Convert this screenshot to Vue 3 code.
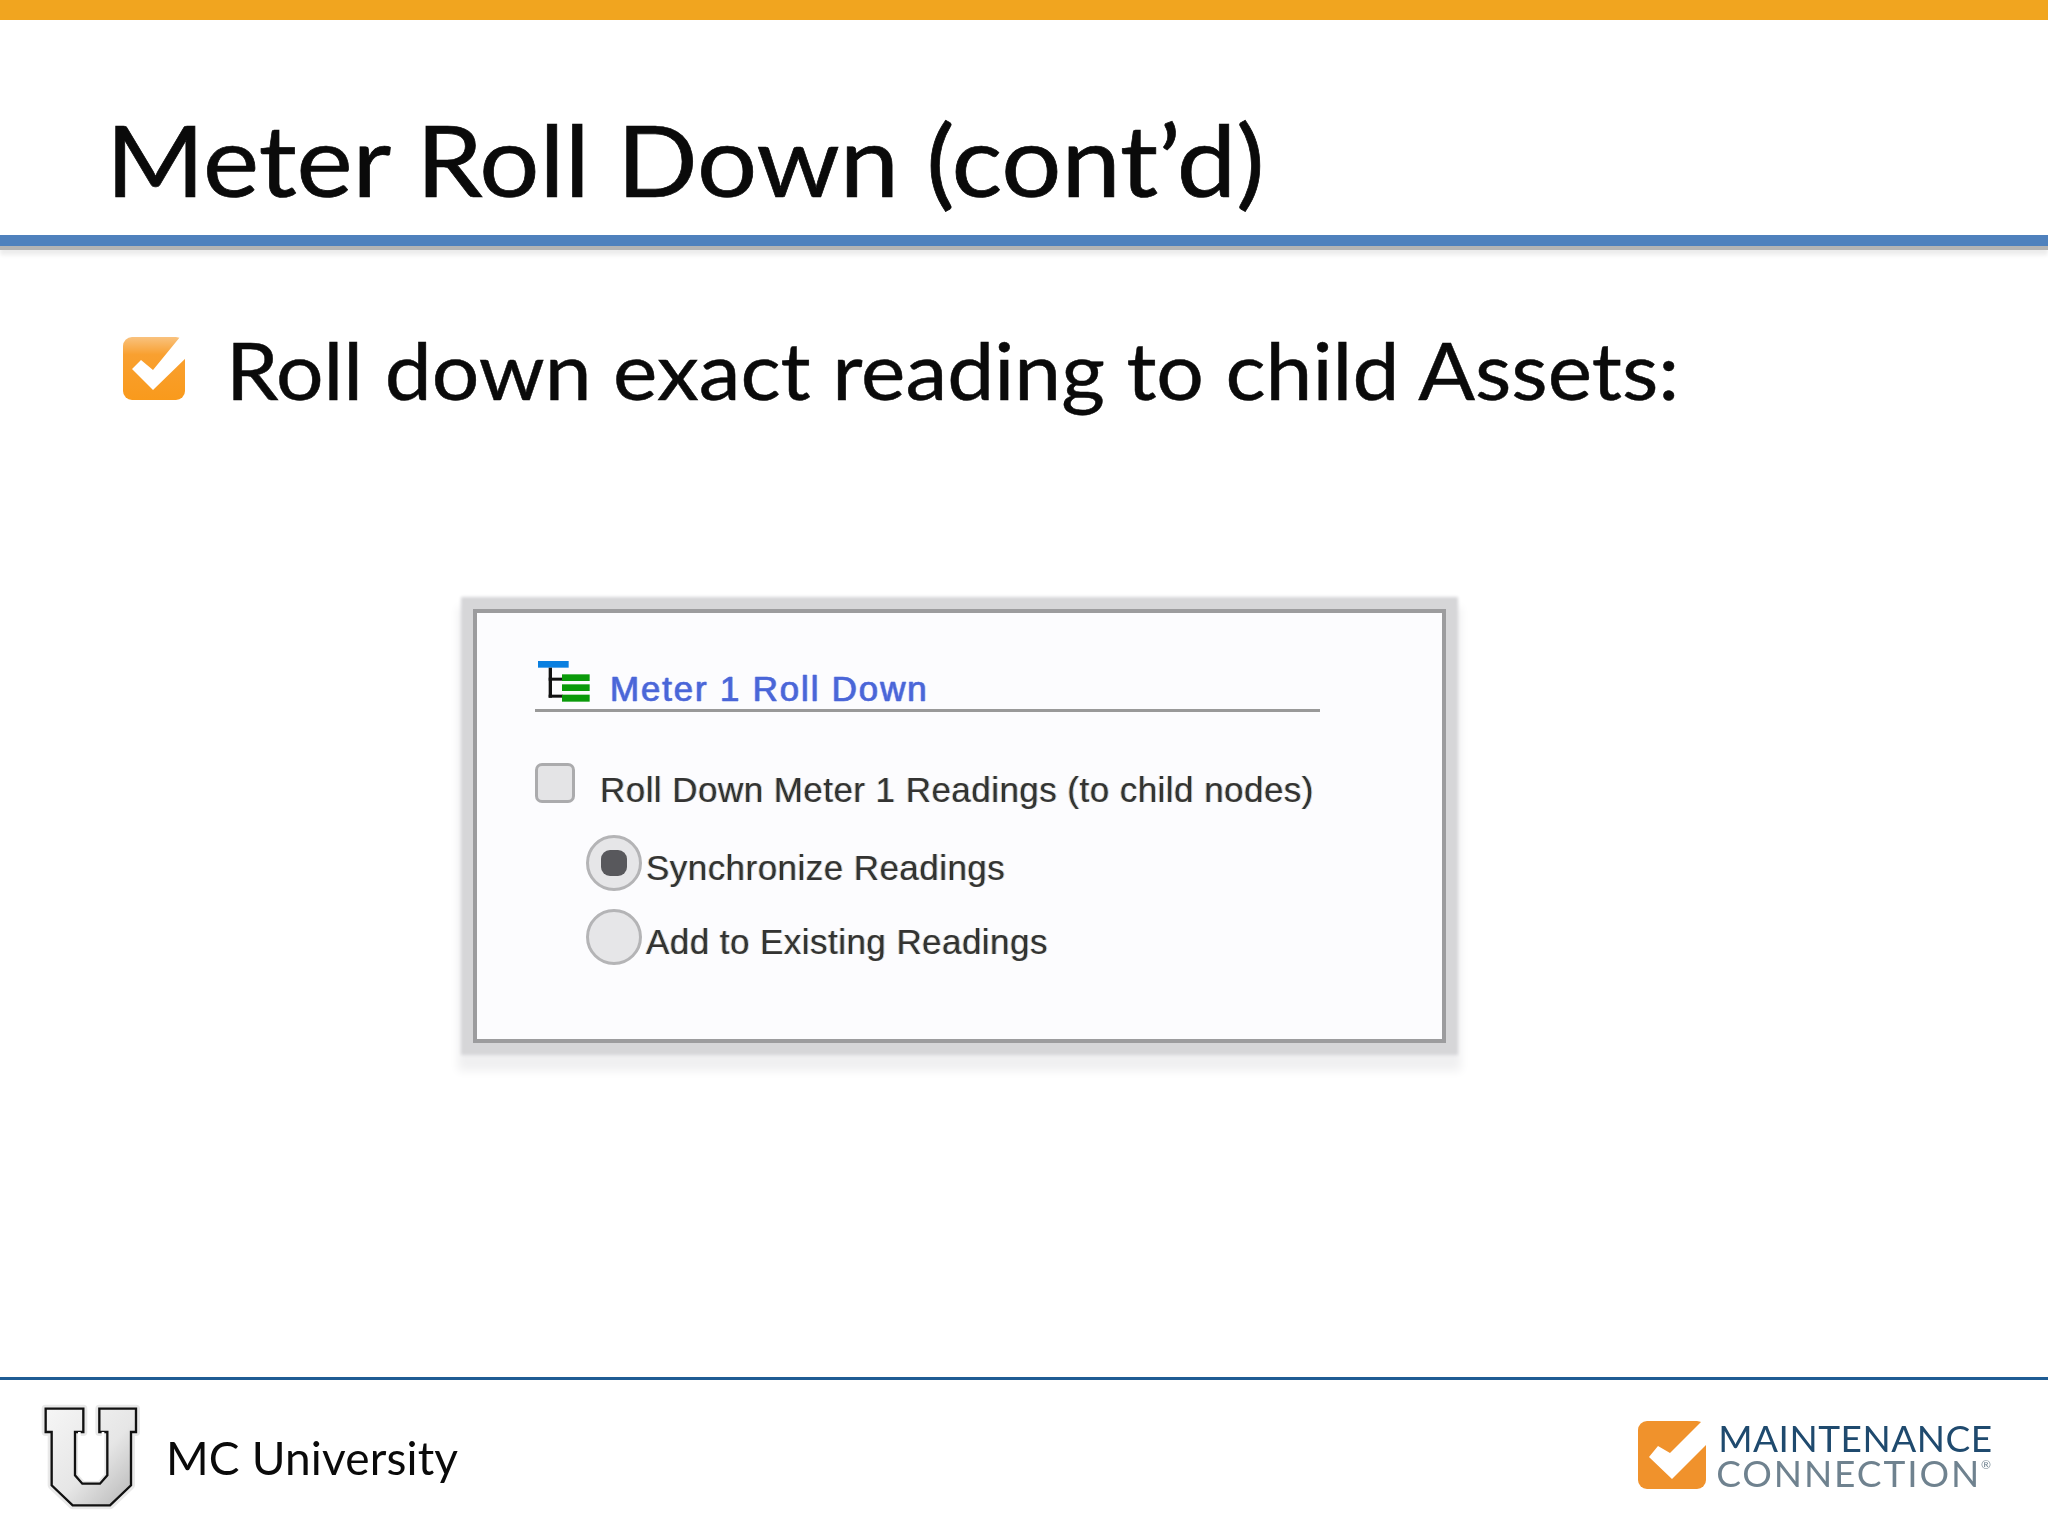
<template>
  <div class="slide">
    <div class="top-bar"></div>

    <header class="title-area">
      <h1 class="title">Meter Roll Down (cont’d)</h1>
    </header>
    <div class="title-rule"></div>

    <div class="bullet">
      <svg class="bullet-icon" viewBox="0 0 66 64">
        <defs>
          <linearGradient id="boxFill" x1="0" y1="0" x2="0" y2="1">
            <stop offset="0" stop-color="#f9c27e" />
            <stop offset="0.28" stop-color="#f9a030" />
            <stop offset="1" stop-color="#f99a1c" />
          </linearGradient>
        </defs>
        <rect x="0" y="0" width="62" height="63" rx="9" fill="url(#boxFill)" />
        <polygon points="30,33 57,0 66,0 66,18 30,53 9,32 18,23" fill="#fff" />
      </svg>
      <span class="bullet-text">Roll down exact reading to child Assets:</span>
    </div>

    <section class="panel">
      <div class="panel-head">
        <svg class="tree-icon" viewBox="263 215 156 123">
          <rect x="263" y="215" width="92" height="20" fill="#0a7fe0" />
          <rect x="295" y="235" width="10" height="90" fill="#111" />
          <rect x="295" y="265" width="42" height="9" fill="#111" />
          <rect x="295" y="316" width="42" height="9" fill="#111" />
          <rect x="335" y="255" width="83" height="20" fill="#0a9a0a" />
          <rect x="335" y="285" width="83" height="20" fill="#0a9a0a" />
          <rect x="335" y="316" width="83" height="21" fill="#0a9a0a" />
        </svg>
        <span class="panel-title">Meter 1 Roll Down</span>
      </div>

      <div class="check-row">
        <span class="checkbox"></span>
        <span class="label">Roll Down Meter 1 Readings (to child nodes)</span>
      </div>

      <div v-for="opt in options" :key="opt.text" class="radio-row">
        <span class="radio" :class="{ on: opt.on }"></span>
        <span class="label">{{ opt.text }}</span>
      </div>
    </section>

    <footer class="footer">
      <div class="footer-left">
        <svg class="u-logo" viewBox="120 125 300 330">
          <defs>
            <linearGradient id="uFill" x1="0" y1="0" x2="1" y2="1">
              <stop offset="0" stop-color="#f6f6f6" />
              <stop offset="0.55" stop-color="#e6e6e6" />
              <stop offset="1" stop-color="#b4b4b4" />
            </linearGradient>
          </defs>
          <polygon :points="uPoints" fill="none" stroke="#e9e9e9" stroke-width="24" stroke-linejoin="round" />
          <polygon :points="uPoints" fill="url(#uFill)" stroke="#111" stroke-width="7" stroke-linejoin="miter" />
          <polyline points="238,215 238,340 254,358 293,358 309,340 309,215" fill="none" stroke="#fff" stroke-width="8" />
        </svg>
        <span class="footer-text">MC University</span>
      </div>

      <div class="footer-right">
        <svg class="mc-logo" viewBox="0 0 70 68">
          <rect x="0" y="0" width="68" height="68" rx="9" fill="#f0922c" />
          <polygon points="32,32 64,0 72,0 72,20 34,58 11,36 20,25" fill="#fff" />
        </svg>
        <div class="brand">
          <div class="brand-top">MAINTENANCE</div>
          <div class="brand-bottom">CONNECTION<span class="reg">®</span></div>
        </div>
      </div>
    </footer>
  </div>
</template>

<script setup>
const options = [
  { text: 'Synchronize Readings', on: true },
  { text: 'Add to Existing Readings', on: false }
]

const uPoints =
  '137,145 250,145 250,215 225,215 225,345 247,370 300,370 322,345 322,215 298,215 298,145 408,145 408,215 393,215 393,375 330,435 218,435 155,375 155,215 137,215'
</script>

<style>
html,
body {
  margin: 0;
  background: #fff;
}
</style>

<style scoped>
.slide {
  width: 2048px;
  height: 1536px;
  display: flex;
  flex-direction: column;
  background: #fff;
  font-family: Lato, "Liberation Sans", sans-serif;
  color: #0a0a0a;
  overflow: hidden;
}

.top-bar {
  height: 20px;
  background: #f1a51f;
}

.title-area {
  height: 215px;
  padding-left: 106px;
  display: flex;
  align-items: flex-end;
}

.title {
  margin: 0 0 16px;
  font-size: 98px;
  font-weight: 400;
  line-height: 120px;
  white-space: nowrap;
  -webkit-text-stroke: 0.7px #0a0a0a;
  transform: scaleX(1.084);
  transform-origin: left;
  filter: blur(0.4px);
}

.title-rule {
  height: 11px;
  background: #4f81bd;
  box-shadow: 0 4px 0 #b4b4b4, 0 9px 4px #ececec;
}

.bullet {
  margin: 91px 0 0 123px;
  display: flex;
  align-items: center;
  height: 64px;
}

.bullet-icon {
  width: 66px;
  height: 64px;
  flex: none;
  filter: blur(0.4px);
}

.bullet-text {
  margin-left: 37px;
  font-size: 80px;
  line-height: 64px;
  white-space: nowrap;
  -webkit-text-stroke: 0.5px #0a0a0a;
  transform: scaleX(1.05);
  transform-origin: left;
  filter: blur(0.4px);
}

.panel {
  box-sizing: border-box;
  width: 973px;
  height: 434px;
  margin: 208px 0 0 473px;
  padding: 48px 0 0 58px;
  background: #fcfcfe;
  border: 4px solid #9c9c9e;
  box-shadow: 0 0 3px 12px #d6d6d8, 0 13px 9px 15px #f0f0f1;
  font-family: "Liberation Sans", Arial, sans-serif;
}

.panel-head {
  width: 785px;
  height: 48px;
  border-bottom: 3px solid #999;
  display: flex;
  align-items: flex-start;
}

.tree-icon {
  width: 52px;
  height: 41px;
  margin-left: 3px;
  flex: none;
  filter: blur(0.4px);
}

.panel-title {
  margin: 8px 0 0 20px;
  font-size: 35px;
  line-height: 40px;
  letter-spacing: 1.8px;
  color: #4a66d8;
  -webkit-text-stroke: 0.5px #4a66d8;
  text-shadow: -1px 0 rgba(190, 130, 230, 0.5), 1px 0 rgba(90, 170, 240, 0.6);
  filter: blur(0.5px);
  white-space: nowrap;
}

.check-row {
  margin-top: 51px;
  display: flex;
  align-items: center;
  height: 40px;
}

.checkbox {
  box-sizing: border-box;
  width: 40px;
  height: 40px;
  flex: none;
  background: #e4e4e6;
  border: 3px solid #ababad;
  border-radius: 7px;
  filter: blur(0.5px);
}

.label {
  font-size: 35px;
  line-height: 40px;
  letter-spacing: 0.45px;
  color: #333;
  text-shadow: -1px 0 rgba(225, 160, 70, 0.5), 1px 0 rgba(80, 160, 230, 0.5);
  filter: blur(0.5px);
  white-space: nowrap;
}

.check-row .label {
  margin: 13px 0 0 25px;
}

.radio-row {
  display: flex;
  align-items: center;
  height: 56px;
  margin: 18px 0 0 51px;
}

.radio-row .label {
  margin: 10px 0 0 4px;
}

.check-row + .radio-row {
  margin-top: 32px;
}

.radio {
  box-sizing: border-box;
  width: 56px;
  height: 56px;
  flex: none;
  border-radius: 50%;
  background: #e6e6e8;
  border: 3px solid #b4b4b6;
  display: flex;
  align-items: center;
  justify-content: center;
  filter: blur(0.5px);
}

.radio.on::after {
  content: "";
  width: 26px;
  height: 26px;
  border-radius: 9px;
  background: #58585c;
}

.footer {
  margin-top: auto;
  box-sizing: border-box;
  height: 159px;
  border-top: 3px solid #1f5c94;
  display: flex;
  justify-content: space-between;
  align-items: flex-start;
}

.footer-left {
  display: flex;
  align-items: center;
  margin: 22px 0 0 40px;
}

.u-logo {
  width: 100px;
  height: 110px;
  flex: none;
}

.footer-text {
  margin-left: 26px;
  font-size: 46px;
  letter-spacing: 0.15px;
  white-space: nowrap;
  filter: blur(0.3px);
}

.footer-right {
  display: flex;
  align-items: center;
  margin: 40px 55px 0 0;
}

.mc-logo {
  width: 70px;
  height: 68px;
  flex: none;
  filter: blur(0.5px);
}

.brand {
  margin-left: 10px;
  font-size: 37px;
  line-height: 35px;
  white-space: nowrap;
  filter: blur(0.5px);
}

.brand-top {
  color: #1f4a6e;
  letter-spacing: 0.5px;
}

.brand-bottom {
  color: #6f828f;
  letter-spacing: 1.9px;
  margin-left: -2px;
}

.reg {
  font-size: 12px;
  line-height: 0;
  vertical-align: 18px;
}
</style>
